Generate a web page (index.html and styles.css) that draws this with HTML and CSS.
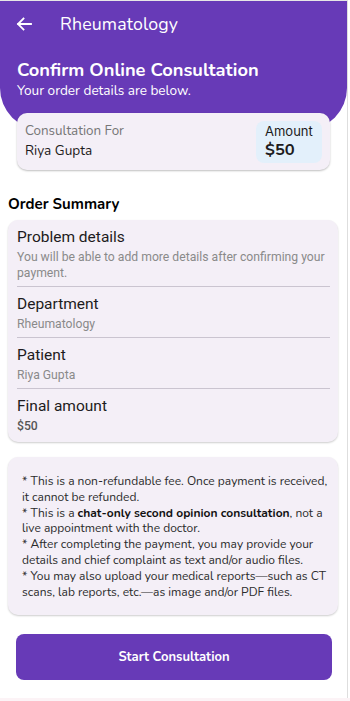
FILE: index.html
```html
<!DOCTYPE html>
<html>
<head>
<meta charset="utf-8">
<link rel="stylesheet" href="styles.css">
</head>
<body>
<div class="page">
  <header class="hero">
    <div class="appbar">
      <svg class="back" width="16" height="14" viewBox="0 0 16 14"><path d="M15 7H2M7.5 1.5L2 7l5.5 5.5" fill="none" stroke="#fff" stroke-width="1.8" stroke-linecap="square"/></svg>
      <span class="appbar-title">Rheumatology</span>
    </div>
    <h1 class="hero-title">Confirm Online Consultation</h1>
    <p class="hero-sub">Your order details are below.</p>
  </header>

  <section class="for-card">
    <div class="for-left">
      <div class="for-label">Consultation For</div>
      <div class="for-name">Riya Gupta</div>
    </div>
    <div class="amount-box">
      <div class="amount-label">Amount</div>
      <div class="amount-value">$50</div>
    </div>
  </section>

  <h2 class="section-title">Order Summary</h2>

  <section class="summary">
    <div class="row">
      <div class="row-title">Problem details</div>
      <div class="row-sub">You will be able to add more details after confirming your payment.</div>
    </div>
    <div class="row">
      <div class="row-title">Department</div>
      <div class="row-sub">Rheumatology</div>
    </div>
    <div class="row">
      <div class="row-title">Patient</div>
      <div class="row-sub">Riya Gupta</div>
    </div>
    <div class="row">
      <div class="row-title">Final amount</div>
      <div class="row-sub dark">$50</div>
    </div>
  </section>

  <section class="notes">
    <p>* This is a non-refundable fee. Once payment is received, it cannot be refunded.</p>
    <p>* This is a <b>chat-only second opinion consultation</b>, not a live appointment with the doctor.</p>
    <p>* After completing the payment, you may provide your details and chief complaint as text and/or audio files.</p>
    <p>* You may also upload your medical reports—such as CT scans, lab reports, etc.—as image and/or PDF files.</p>
  </section>

  <div class="actions">
    <button class="start">Start Consultation</button>
  </div>
</div>
<div class="bottom-strip"></div>
</body>
</html>
```

FILE: styles.css
```css
html, body {
  margin: 0;
  padding: 0;
  background: #fff;
}
body {
  font-family: "Nunito", "Lato", "Open Sans", sans-serif;
  color: #1d1b20;
  width: 350px;
  height: 701px;
  overflow: hidden;
}
.page {
  width: 347px;
  height: 697px;
  border-top: 1px solid #e6e6e6;
  border-right: 1px solid #dedede;
  background: #fff;
}
.hero {
  background: #673ab7;
  color: #fff;
  height: 129px;
  border-radius: 0 0 42px 42px;
  box-sizing: border-box;
}
.appbar {
  height: 46px;
  display: flex;
  align-items: center;
  padding-left: 16px;
}
.back {
  display: block;
}
.appbar-title {
  margin-left: 28px;
  font-size: 17.8px;
  letter-spacing: 0.1px;
}
.hero-title {
  margin: 11px 0 0 17px;
  font-size: 18.3px;
  font-weight: 700;
  line-height: 24px;
}
.hero-sub {
  margin: 0 0 0 17px;
  font-size: 13.6px;
  line-height: 18px;
}
.for-card {
  margin: -17px 17px 0 17px;
  height: 57px;
  background: #f4eff7;
  border-radius: 10px;
  box-shadow: 0 1px 2px rgba(0,0,0,0.25);
  display: flex;
  justify-content: space-between;
  align-items: center;
  padding: 0 8px 0 8px;
  box-sizing: border-box;
  position: relative;
}
.for-label {
  font-size: 13.4px;
  color: #767676;
  line-height: 18px;
}
.for-name {
  font-size: 13.6px;
  color: #1d1b20;
  line-height: 20px;
  margin-top: 1px;
}
.amount-box {
  background: #e3f0fb;
  border-radius: 8px;
  width: 66px;
  height: 42px;
  box-sizing: border-box;
  padding: 2px 0 0 9px;
}
.amount-label {
  font-family: "Inter", "Roboto", sans-serif;
  font-size: 13px;
  line-height: 16px;
}
.amount-value {
  font-size: 16.5px;
  font-weight: 700;
  line-height: 22px;
}
.section-title {
  margin: 24px 0 0 8px;
  font-size: 15px;
  font-weight: 700;
  line-height: 20px;
  color: #000;
}
.summary {
  margin: 6px 9px 0 8px;
  background: #f4eff7;
  border-radius: 10px;
  box-shadow: 0 1px 2px rgba(0,0,0,0.2);
  padding: 0 8px 3px 9px;
}
.row {
  padding: 7px 0 5px 0;
  border-bottom: 1px solid #cac4d0;
}
.row:last-child {
  border-bottom: none;
}
.row-title {
  font-family: "Roboto", sans-serif;
  font-size: 15.5px;
  line-height: 20px;
  color: #1d1b20;
}
.row-sub {
  font-family: "Roboto", sans-serif;
  font-size: 12.2px;
  line-height: 16px;
  color: #8a8a8a;
  margin-top: 2px;
}
.row-sub.dark {
  color: #555;
  font-weight: 500;
}
.notes {
  margin: 15px 9px 0 8px;
  background: #f4eff7;
  border-radius: 10px;
  box-shadow: 0 1px 2px rgba(0,0,0,0.2);
  padding: 17px 8px 15px 14px;
  font-size: 12px;
  line-height: 15.8px;
  color: #2b2b2b;
}
.notes p {
  margin: 0;
}
.notes b {
  font-weight: 700;
  color: #111;
}
.actions {
  padding: 19px 15px 0 16px;
}
.start {
  width: 100%;
  height: 46px;
  border: none;
  border-radius: 8px;
  background: #673ab7;
  color: #fff;
  font-family: "Nunito", "Lato", sans-serif;
  font-size: 13px;
  font-weight: 700;
}
.bottom-strip {
  height: 3px;
  background: #fcf3f6;
}
```
